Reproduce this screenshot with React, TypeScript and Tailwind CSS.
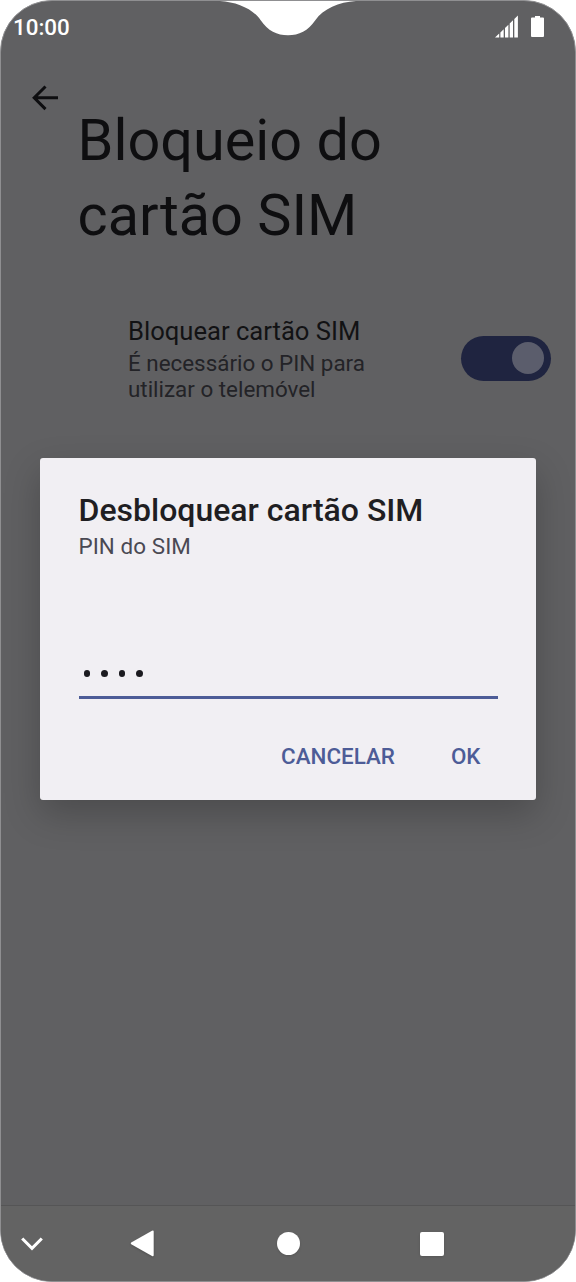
const SignalIcon = () => (
    <svg width="24" height="23" viewBox="0 0 24 23" fill="white" className="block">
        <path d="M0 22.600 4.200 18.600V22.600zM5.400 17.500 8.700 14.200V22.600H5.400zM10 13 13.400 9.700V22.600H10zM14.700 8.500 18 5.200V22.600H14.700zM19.300 4 22.900.4V22.600H19.300z" />
    </svg>
);

const BatteryIcon = () => (
    <svg width="13" height="21" viewBox="0 0 13 21" fill="white" className="block">
        <path d="M4 0H9V1.6H12Q13 1.6 13 2.6V20Q13 21 12 21H1Q0 21 0 20V2.6Q0 1.6 1 1.6H4z" />
    </svg>
);

const Notch = () => (
    <svg width="140" height="37" viewBox="0 0 140 37" className="absolute -top-px left-[216px]">
        <path d="M0 0H140V1H139C122 2 106 9 98.500 20C91 31 82 35.300 71 35.300C60 35.300 51 31 43.500 20C36 9 20 2 3 1H0z" fill="white" />
    </svg>
);

const StatusBar = () => (
    <header className="flex h-[55px] items-start justify-between pl-3 pr-[31px]">
        <span className="mt-[13px] text-[22.4px] leading-[26px] font-medium text-white">10:00</span>
        <div className="mt-[14px] flex items-start gap-[12.500px]">
            <SignalIcon />
            <div className="mt-px">
                <BatteryIcon />
            </div>
        </div>
    </header>
);

const NavBar = () => (
    <nav className="flex h-[76px] items-center border-t border-[#555556] bg-[#636363]">
        <svg width="22" height="14" viewBox="0 0 22 14" fill="none" stroke="white" strokeWidth="3" className="ml-5">
            <path d="M1.200 1.500 11 11.300 20.800 1.500" />
        </svg>
        <svg width="24" height="27" viewBox="0 0 24 27" fill="white" className="ml-[87px] drop-shadow-[0_1px_1px_rgba(0,0,0,0.2)]">
            <path d="M22 .7Q23.700 0 23.700 1.800V25Q23.700 26.800 22 26L1.200 14.200Q.2 13.400 1.200 12.600z" />
        </svg>
        <div className="ml-[122.500px] size-[23px] rounded-full bg-white shadow-sm" />
        <div className="ml-[120.500px] size-6 rounded-xs bg-white shadow-sm" />
    </nav>
);

const SimDialog = () => (
    <div
        role="dialog"
        className="absolute top-[456.500px] left-[39px] flex h-[342px] w-[496px] flex-col rounded-[3px] bg-[#f1eff3] px-[38.500px] pt-[33.500px] shadow-[0_14px_36px_rgba(0,0,0,0.22)]"
    >
        <h2 className="text-[32px] leading-[38px] font-medium text-[#1f1e22]">Desbloquear cartão SIM</h2>
        <p className="mt-1 text-[22.4px] leading-[26px] tracking-[0.08px] text-[#4a4953]">PIN do SIM</p>
        <div className="mt-[92px] flex h-[48px] items-center gap-[11px] border-b-[3px] border-[#4d5c97] pl-[5px]">
            {[0, 1, 2, 3].map((i) => (
                <span key={i} className="h-[7.500px] w-[6.660px] rounded-full bg-[#1b1a1f]" />
            ))}
        </div>
        <div className="mt-[44px] flex justify-end gap-14 pr-[17px] text-[22.4px] leading-[26px] font-medium text-[#4d5c97]">
            <button>CANCELAR</button>
            <button>OK</button>
        </div>
    </div>
);

export default function App() {
    return (
        <div className="h-[1282px] w-[576px] overflow-hidden bg-white font-['Roboto',sans-serif]">
            <div className="relative flex h-full flex-col overflow-hidden rounded-[52px] border border-[#8f8f91] bg-[#606062]">
                <StatusBar />
                <Notch />
                <main className="flex-grow">
                    <div className="flex items-start">
                        <svg width="26" height="26" viewBox="0 0 26 26" fill="none" stroke="#0e0e10" strokeWidth="3" className="mt-[29px] ml-[31px]">
                            <path d="M26 12.800H2.200M13.500 1.500 2.200 12.800 13.500 24.100" />
                        </svg>
                        <h1 className="mt-[47px] ml-[19.500px] w-[340px] text-[57.6px] leading-[75px] text-[#0e0e10]">
                            Bloqueio do cartão SIM
                        </h1>
                    </div>
                    <div className="mt-[62.500px] flex items-start justify-between pr-[24.500px] pl-[127px]">
                        <div>
                            <p className="mt-[0.500px] text-[25.6px] leading-[30px] text-[#121214]">Bloquear cartão SIM</p>
                            <p className="mt-1 w-[250px] text-[22.4px] leading-[26px] text-[#232327]">
                                É necessário o PIN para utilizar o telemóvel
                            </p>
                        </div>
                        <div className="mt-5 flex h-[45px] w-[90px] items-center justify-end rounded-full bg-[#1f2440] pr-[7px]">
                            <div className="size-8 rounded-full bg-[#5b5d6c]" />
                        </div>
                    </div>
                </main>
                <NavBar />
                <SimDialog />
            </div>
        </div>
    );
}
